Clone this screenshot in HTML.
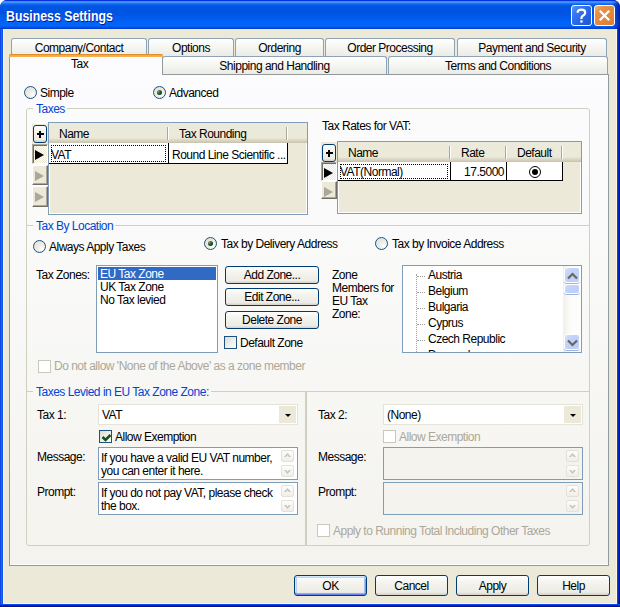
<!DOCTYPE html>
<html><head><meta charset="utf-8">
<style>
*{box-sizing:border-box;margin:0;padding:0}
html,body{width:620px;height:607px;overflow:hidden;background:#fff}
body{position:relative;font-family:"Liberation Sans",sans-serif;font-size:12px;letter-spacing:-0.5px;color:#000}
.a{position:absolute}
.t{position:absolute;white-space:nowrap;line-height:13px;font-size:12px;letter-spacing:-0.5px}
#win{left:0;top:0;width:620px;height:607px;border-radius:7px 7px 0 0;background:#0831d9;overflow:hidden}
#title{left:0;top:0;width:620px;height:29px;
 background:linear-gradient(180deg,#0831d9 0px,#0831d9 1px,#3d8ff8 1px,#3a92fc 2.5px,#1466ee 4px,#0056e4 6px,#0053e1 13px,#005cee 18px,#0064f8 23px,#0064fa 26px,#0050e0 27.5px,#0038c8 29px)}
#lb{left:0;top:29px;width:3px;height:578px;background:linear-gradient(90deg,#0a3bd5,#166aee 50%,#0a4af0)}
#rb{left:617px;top:29px;width:3px;height:578px;background:linear-gradient(90deg,#0a44e8 0,#0a44e8 33%,#0024b8 33%,#0024b8 66%,#001590 66%)}
#bb{left:0;top:604px;width:620px;height:3px;background:linear-gradient(180deg,#0a4af0 0,#0a4af0 33%,#0024b0 33%,#0024b0 66%,#001590 66%)}
#client{left:3px;top:29px;width:614px;height:575px;background:#ece9d8;box-shadow:inset 1px 0 0 #fdf6e0,inset -1px 0 0 #fdf6e0,inset 0 -1px 0 #fdf6e0}
.ttl{left:5.6px;top:8px;color:#fff;font-weight:bold;font-size:14px;line-height:16px;letter-spacing:0;text-shadow:1px 1px 0 #0a1883;transform:scaleX(0.88);transform-origin:0 0}
.tb{width:21px;height:21px;border:1px solid #fff;border-radius:3px}
.tab{position:absolute;border:1px solid #8fa3b6;border-bottom:none;border-radius:3px 3px 0 0;background:linear-gradient(180deg,#fff,#f3f3ef 60%,#ecebe6)}
.tabtxt{position:absolute;left:0;right:0;text-align:center;line-height:13px}
#page{left:9px;top:74px;width:600px;height:492px;border:1px solid #919b9c;background:linear-gradient(180deg,#fcfcfe 0%,#f9f9f8 40%,#f4f3ee 100%)}
.gl{height:1px;background:#d0d0bf}
.grp{position:absolute;border:1px solid #d0d0bf;border-radius:3px}
.glbl{position:absolute;color:#0046d5;line-height:13px;white-space:nowrap;padding:0 2px}
.radio{position:absolute;width:13px;height:13px;border-radius:50%;border:1px solid #1c5180;background:radial-gradient(circle at 70% 70%,#fff 0,#f0f0ea 30%,#dcdcd5 100%)}
.radio.on::after{content:"";position:absolute;left:3px;top:3px;width:5px;height:5px;border-radius:50%;background:radial-gradient(circle at 30% 30%,#8a8a7a,#145014 55%,#083808)}
.chk{position:absolute;width:13px;height:13px;border:1px solid #1c5180;background:linear-gradient(135deg,#dcdcd5,#fff)}
.chk.dis{border-color:#cac8bb;background:#fff}
.btn{position:absolute;border:1px solid #003c74;border-radius:3px;background:linear-gradient(180deg,#fff 0%,#f5f4ef 30%,#ecebe6 85%,#d6d0c5 100%);text-align:center;line-height:13px}
.tbox{position:absolute;border:1px solid #7f9db9;background:#fff}
.dis{color:#aca899}

.gframe{border:1px solid #7f9db9;background:#ece9d8;box-shadow:inset 0 0 0 1px #fff}
.ghead{background:linear-gradient(180deg,#ebeadb 0,#ece9d8 15px,#e2dfd0 16px,#d8d2bd 18px,#c4c1b0 20px)}
.gsep{width:2px;height:13px;border-left:1px solid #aca899;border-right:1px solid #fff}
.focus{border:1px dotted #000}
.rsel{width:16px;background:#ece9d8;border-top:1px solid #fff;border-left:1px solid #fff;border-right:1px solid #716f64;border-bottom:1px solid #716f64;box-shadow:inset -1px -1px 0 #aca899}
.rsel.on{background:repeating-conic-gradient(#fff 0 25%,#ece9d8 0 50%) 0 0/2px 2px;border-top:1px solid #aca899;border-left:1px solid #aca899;border-right:1px solid #fff;border-bottom:1px solid #fff;box-shadow:inset 1px 1px 0 #716f64}
.tri{position:absolute;left:2px;top:5px;width:0;height:0;border-top:5px solid transparent;border-bottom:5px solid transparent;border-left:9px solid #000}
.tri.g{border-left-color:#aca899}
.combo{border:1px solid #e5e3d8;background:#fff}
.cbtn{left:180px;top:1px;width:17px;height:17px;background:#ece9d8}
.cbtn::after{content:"";position:absolute;left:6px;top:8px;border-left:3px solid transparent;border-right:3px solid transparent;border-top:3px solid #000}
.spin{width:13px;height:12px;border:1px solid #e3e1d8;border-radius:2px;background:linear-gradient(180deg,#fdfdfb,#efeee8)}
.spin::after{content:"";position:absolute;left:2px;top:2px;width:7px;height:4px;background:linear-gradient(#c7c5b8,#c7c5b8);clip-path:polygon(50% 0,100% 100%,70% 100%,50% 55%,30% 100%,0 100%)}
.spin.dn::after{top:4px;clip-path:polygon(0 0,30% 0,50% 45%,70% 0,100% 0,50% 100%)}
.sb{background:linear-gradient(90deg,#f0efe8,#fbfbf9 40%,#fefefe)}
.sbb{border:1px solid #fff;border-radius:3px;background:linear-gradient(135deg,#d8e4fd,#c2d3fb 30%,#bccffa);box-shadow:0 1px 0 #9db3e0}
.btn.def{box-shadow:inset 0 1px 0 #cee7ff,inset 0 2px 0 #bcd4f6,inset 0 -1px 0 #6982ee,inset 0 -2px 0 #8eacf1,inset 1px 0 0 #cee7ff,inset 2px 0 0 #b9cff5,inset -1px 0 0 #7d99f1,inset -2px 0 0 #a4bdf4}
</style></head><body>
<div id="win" class="a">
 <div id="title" class="a"></div>
 <div class="a" style="left:612px;top:0;width:8px;height:29px;background:linear-gradient(90deg,rgba(0,30,180,0),rgba(0,30,170,.5) 60%,rgba(0,20,140,.85))"></div>
 <div id="lb" class="a"></div><div id="rb" class="a"></div><div id="bb" class="a"></div>
 <div id="client" class="a"></div>
 <div class="t ttl">Business Settings</div>
 <div class="a tb" style="left:571px;top:5px;background:linear-gradient(135deg,#5d9af8 0,#3a78f0 25%,#2764e6 60%,#1f55d8 100%)">
  <svg class="a" style="left:0;top:0" width="19" height="19"><path d="M5.6 6.8 Q5.6 3.6 9.4 3.6 Q13.2 3.6 13.2 6.6 Q13.2 8.6 11.2 9.6 Q9.4 10.5 9.4 12.2 L9.4 13" stroke="#fff" stroke-width="2.2" fill="none"/><rect x="8.3" y="14.3" width="2.3" height="2.3" fill="#fff"/></svg>
 </div>
 <div class="a tb" style="left:594px;top:5px;background:linear-gradient(135deg,#f2b27a 0,#e88f48 25%,#e4863c 60%,#dc7c34 100%)">
  <svg class="a" style="left:0;top:0" width="19" height="19"><path d="M4.8 4.8 L14.2 14.2 M14.2 4.8 L4.8 14.2" stroke="#fff" stroke-width="2.3"/></svg>
 </div>

 <!-- top tab row -->
 <div class="tab" style="left:11px;top:38px;width:136px;height:18px"><div class="tabtxt" style="top:3px">Company/Contact</div></div>
 <div class="tab" style="left:148px;top:38px;width:86px;height:18px"><div class="tabtxt" style="top:3px">Options</div></div>
 <div class="tab" style="left:235px;top:38px;width:89px;height:18px"><div class="tabtxt" style="top:3px">Ordering</div></div>
 <div class="tab" style="left:325px;top:38px;width:130px;height:18px"><div class="tabtxt" style="top:3px">Order Processing</div></div>
 <div class="tab" style="left:457px;top:38px;width:150px;height:18px"><div class="tabtxt" style="top:3px">Payment and Security</div></div>
 <!-- front tab row -->
 <div class="tab" style="left:162px;top:56px;width:225px;height:18px"><div class="tabtxt" style="top:3px">Shipping and Handling</div></div>
 <div class="tab" style="left:388px;top:56px;width:220px;height:18px"><div class="tabtxt" style="top:3px">Terms and Conditions</div></div>

 <div id="page" class="a"></div><div class="a" style="left:10px;top:564px;width:598px;height:1px;background:#fff"></div>
 <!-- active tab -->
 <div class="a" style="left:9px;top:54px;width:154px;height:21px;background:#fcfcfe;border-left:1px solid #919b9c;border-right:1px solid #919b9c;border-radius:2px 2px 0 0"><div class="t" style="left:61px;top:4px">Tax</div></div>
 <div class="a" style="left:9px;top:54px;width:154px;height:3px;border-radius:2px 2px 0 0;background:linear-gradient(180deg,#e68b2c 0,#e68b2c 1px,#f0a848 1px,#f5b451 3px)"></div>

 <!-- radios -->
 <div class="radio" style="left:24px;top:86px"></div><div class="t" style="left:40px;top:87px">Simple</div>
 <div class="radio on" style="left:153px;top:86px"></div><div class="t" style="left:169px;top:87px">Advanced</div>


 <!-- Taxes group -->
 <div class="grp" style="left:26px;top:108px;width:564px;height:438px"></div>
 <div class="a gl" style="left:27px;top:225px;width:562px"></div>
 <div class="a gl" style="left:27px;top:391px;width:562px"></div>
 <div class="a" style="left:305px;top:391px;width:2px;height:154px;background:#d0d0bf"></div>
 <div class="glbl" style="left:33px;top:103px;background:#fbfbfc;padding-left:3px">Taxes</div>
 <!-- Grid 1 -->
 <div class="a" style="left:32px;top:124px;width:16px;height:20px;background:#ece9d8"></div>
 <div class="btn" style="left:33px;top:125px;width:14px;height:18px"></div>
 <div class="a" style="left:37px;top:133px;width:7px;height:2px;background:#000"></div>
 <div class="a" style="left:39px;top:131px;width:2px;height:7px;background:#000"></div>
 <div class="a gframe" style="left:48px;top:122px;width:260px;height:93px"></div>
 <div class="a ghead" style="left:49px;top:123px;width:258px;height:20px"></div>
 <div class="a gsep" style="left:167px;top:127px"></div>
 <div class="a gsep" style="left:286px;top:127px"></div>
 <div class="t" style="left:59px;top:128px">Name</div>
 <div class="t" style="left:179px;top:128px">Tax Rounding</div>
 <div class="a" style="left:49px;top:143px;width:239px;height:21px;background:#fff;border-bottom:1px solid #000;border-right:1px solid #000"></div>
 <div class="a" style="left:168px;top:143px;width:1px;height:21px;background:#000"></div>
 <div class="a focus" style="left:51px;top:145px;width:115px;height:17px"></div>
 <div class="t" style="left:51px;top:149px">VAT</div>
 <div class="t" style="left:172px;top:149px">Round Line Scientific ...</div>
 <div class="a rsel on" style="left:32px;top:144px;height:20px"><div class="tri"></div></div>
 <div class="a rsel" style="left:32px;top:165px;height:20px"><div class="tri g"></div></div>
 <div class="a rsel" style="left:32px;top:186px;height:21px"><div class="tri g"></div></div>

 <!-- Grid 2 -->
 <div class="t" style="left:322px;top:120px">Tax Rates for VAT:</div>
 <div class="a" style="left:321px;top:142px;width:16px;height:20px;background:#ece9d8"></div>
 <div class="btn" style="left:322px;top:144px;width:14px;height:18px"></div>
 <div class="a" style="left:326px;top:152px;width:7px;height:2px;background:#000"></div>
 <div class="a" style="left:328px;top:150px;width:2px;height:7px;background:#000"></div>
 <div class="a gframe" style="left:337px;top:141px;width:245px;height:73px"></div>
 <div class="a ghead" style="left:338px;top:142px;width:243px;height:20px"></div>
 <div class="a gsep" style="left:449px;top:146px"></div>
 <div class="a gsep" style="left:505px;top:146px"></div>
 <div class="a gsep" style="left:561px;top:146px"></div>
 <div class="t" style="left:348px;top:147px">Name</div>
 <div class="t" style="left:461px;top:147px">Rate</div>
 <div class="t" style="left:517px;top:147px">Default</div>
 <div class="a" style="left:338px;top:162px;width:225px;height:19px;background:#fff;border-bottom:1px solid #000;border-right:1px solid #000"></div>
 <div class="a" style="left:450px;top:162px;width:1px;height:19px;background:#000"></div>
 <div class="a" style="left:506px;top:162px;width:1px;height:19px;background:#000"></div>
 <div class="a focus" style="left:340px;top:164px;width:108px;height:15px"></div>
 <div class="t" style="left:340px;top:166px">VAT(Normal)</div>
 <div class="t" style="left:450px;width:54px;text-align:right;top:166px">17.5000</div>
 <div class="a" style="left:529px;top:166px;width:12px;height:12px;border-radius:50%;border:1px solid #000;background:#fff"></div>
 <div class="a" style="left:532px;top:169px;width:6px;height:6px;border-radius:50%;background:#000"></div>
 <div class="a rsel on" style="left:321px;top:162px;height:19px"><div class="tri"></div></div>
 <div class="a rsel" style="left:321px;top:181px;height:18px"><div class="tri g"></div></div>

 <!-- Tax by location group -->
  <div class="glbl" style="left:33px;top:220px;background:#f9f9f8;padding-left:3px">Tax By Location</div>
 <div class="radio" style="left:33px;top:240px"></div><div class="t" style="left:49px;top:241px">Always Apply Taxes</div>
 <div class="radio on" style="left:204px;top:237px"></div><div class="t" style="left:221px;top:238px">Tax by Delivery Address</div>
 <div class="radio" style="left:375px;top:237px"></div><div class="t" style="left:392px;top:238px">Tax by Invoice Address</div>
 <div class="t" style="left:36px;top:269px">Tax Zones:</div>
 <div class="tbox" style="left:96px;top:265px;width:122px;height:88px"></div>
 <div class="a" style="left:98px;top:267px;width:118px;height:13px;background:#316ac5"></div>
 <div class="t" style="left:100px;top:268px;color:#fff">EU Tax Zone</div>
 <div class="t" style="left:100px;top:281px">UK Tax Zone</div>
 <div class="t" style="left:100px;top:294px">No Tax levied</div>
 <div class="btn" style="left:225px;top:266px;width:94px;height:18px;padding-top:2px">Add Zone...</div>
 <div class="btn" style="left:225px;top:288px;width:94px;height:18px;padding-top:2px">Edit Zone...</div>
 <div class="btn" style="left:225px;top:311px;width:94px;height:18px;padding-top:2px">Delete Zone</div>
 <div class="chk" style="left:224px;top:336px"></div><div class="t" style="left:240px;top:337px">Default Zone</div>
 <div class="t" style="left:332px;top:269px;line-height:13px;white-space:normal;width:70px">Zone<br>Members for<br>EU Tax<br>Zone:</div>
 <div class="tbox" style="left:402px;top:265px;width:180px;height:88px;overflow:hidden">
  <div class="a" style="left:13px;top:8px;height:80px;border-left:1px dotted #a0a0a0"></div>
  <div class="a" style="left:14px;top:10px;width:8px;border-top:1px dotted #a0a0a0"></div>
  <div class="a" style="left:14px;top:26px;width:8px;border-top:1px dotted #a0a0a0"></div>
  <div class="a" style="left:14px;top:42px;width:8px;border-top:1px dotted #a0a0a0"></div>
  <div class="a" style="left:14px;top:58px;width:8px;border-top:1px dotted #a0a0a0"></div>
  <div class="a" style="left:14px;top:74px;width:8px;border-top:1px dotted #a0a0a0"></div>
  <div class="t" style="left:25px;top:3px">Austria</div>
  <div class="t" style="left:25px;top:19px">Belgium</div>
  <div class="t" style="left:25px;top:35px">Bulgaria</div>
  <div class="t" style="left:25px;top:51px">Cyprus</div>
  <div class="t" style="left:25px;top:67px">Czech Republic</div>
  <div class="t" style="left:25px;top:83px">Denmark</div>
  <div class="a sb" style="left:160px;top:0px;width:18px;height:86px"></div>
  <div class="a sbb" style="left:161px;top:1px;width:16px;height:16px"><svg class="a" style="left:2px;top:4px" width="11" height="8"><path d="M1 6.5 L5.5 2 L10 6.5" stroke="#6b675b" stroke-width="2.2" fill="none"/></svg></div>
  <div class="a sbb" style="left:161px;top:18px;width:16px;height:10px"></div>
  <div class="a sbb" style="left:161px;top:68px;width:16px;height:16px"><svg class="a" style="left:2px;top:4px" width="11" height="8"><path d="M1 1.5 L5.5 6 L10 1.5" stroke="#6b675b" stroke-width="2.2" fill="none"/></svg></div>
 </div>
 <div class="chk dis" style="left:38px;top:360px"></div><div class="t dis" style="left:54px;top:360px">Do not allow 'None of the Above' as a zone member</div>

 <!-- Taxes levied group -->
  <div class="glbl" style="left:33px;top:386px;background:#f7f7f4;padding-left:3px">Taxes Levied in EU Tax Zone Zone:</div>
 <div class="t" style="left:37px;top:409px">Tax 1:</div>
 <div class="a combo" style="left:98px;top:404px;width:200px;height:21px"><div class="t" style="left:3px;top:4px">VAT</div><div class="a cbtn"></div></div>
 <div class="chk" style="left:99px;top:430px"><svg class="a" style="left:1px;top:1px" width="11" height="11"><path d="M1.5 5 L4.5 8 L9.5 3" stroke="#1b4f1b" stroke-width="2.6" fill="none"/></svg></div>
 <div class="t" style="left:115px;top:431px">Allow Exemption</div>
 <div class="t" style="left:37px;top:451px">Message:</div>
 <div class="tbox" style="left:98px;top:447px;width:200px;height:33px"><div class="t" style="left:2px;top:4px;line-height:13px">If you have a valid EU VAT number,<br>you can enter it here.</div><div class="a spin" style="left:182px;top:2px"></div><div class="a spin dn" style="left:182px;top:17px"></div></div>
 <div class="t" style="left:37px;top:486px">Prompt:</div>
 <div class="tbox" style="left:98px;top:482px;width:200px;height:33px"><div class="t" style="left:2px;top:4px;line-height:13px">If you do not pay VAT, please check<br>the box.</div><div class="a spin" style="left:182px;top:2px"></div><div class="a spin dn" style="left:182px;top:17px"></div></div>

 <div class="t" style="left:318px;top:409px">Tax 2:</div>
 <div class="a combo" style="left:383px;top:404px;width:200px;height:21px"><div class="t" style="left:3px;top:4px">(None)</div><div class="a cbtn"></div></div>
 <div class="chk dis" style="left:383px;top:430px"></div>
 <div class="t dis" style="left:399px;top:431px">Allow Exemption</div>
 <div class="t" style="left:318px;top:451px">Message:</div>
 <div class="tbox" style="left:383px;top:447px;width:200px;height:33px;background:#f4f3ee"><div class="a spin" style="left:182px;top:2px"></div><div class="a spin dn" style="left:182px;top:17px"></div></div>
 <div class="t" style="left:318px;top:486px">Prompt:</div>
 <div class="tbox" style="left:383px;top:482px;width:200px;height:33px;background:#f4f3ee"><div class="a spin" style="left:182px;top:2px"></div><div class="a spin dn" style="left:182px;top:17px"></div></div>
 <div class="chk dis" style="left:317px;top:524px"></div>
 <div class="t dis" style="left:333px;top:525px">Apply to Running Total Including Other Taxes</div>

 <!-- dialog buttons -->
 <div class="btn def" style="left:294px;top:575px;width:73px;height:21px;padding-top:4px">OK</div>
 <div class="btn" style="left:375px;top:575px;width:73px;height:21px;padding-top:4px">Cancel</div>
 <div class="btn" style="left:456px;top:575px;width:73px;height:21px;padding-top:4px">Apply</div>
 <div class="btn" style="left:537px;top:575px;width:73px;height:21px;padding-top:4px">Help</div>


</div>
</body></html>
